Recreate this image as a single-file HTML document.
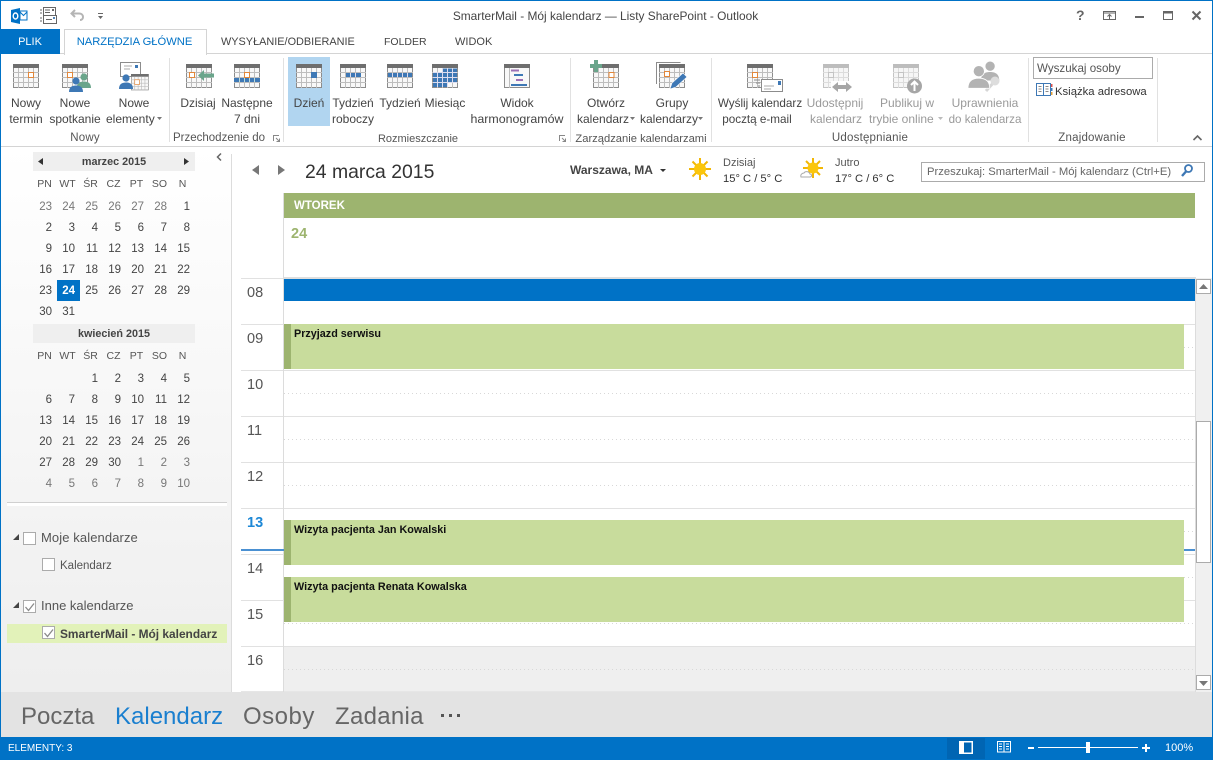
<!DOCTYPE html>
<html lang="pl"><head><meta charset="utf-8"><title>SmarterMail - Mój kalendarz</title>
<style>
html,body{margin:0;padding:0;width:1213px;height:760px;overflow:hidden;background:#fff}
body{position:relative;font-family:"Liberation Sans",sans-serif;font-size:12px;color:#444}
.a{position:absolute}
.t{position:absolute;white-space:nowrap;line-height:16px}
.c{position:absolute;white-space:nowrap;line-height:16px;text-align:center;width:120px}
.g{color:#9a9a9a}
.gl{color:#555;font-size:11.5px}
.sep{position:absolute;top:58px;width:1px;height:84px;background:#e1e1e1}
.row{position:absolute;left:29px;display:flex;height:16px;line-height:16px;font-size:11.5px;color:#444}
.row span{width:23px;text-align:right;flex:none}
.row.h span{color:#555;font-size:10.5px;text-align:center;width:23px;position:relative;left:4px}
.row .m{color:#777}
.hl{position:absolute;left:241px;width:42px;height:1px;background:#e1e1e1}
.gr{position:absolute;left:284px;width:911px;height:1px;background:#e1e1e1}
.dot{position:absolute;left:284px;width:911px;height:1px;background:repeating-linear-gradient(90deg,#d8d8d8 0 1px,transparent 1px 4px)}
.hr{position:absolute;left:247px;font-size:14.5px;color:#555;line-height:16px}
.ev{position:absolute;left:284px;width:900px;height:45px;background:#c8dc9c}
.ev i{position:absolute;left:0;top:0;width:7px;height:100%;background:#9db46f}
.ev b{position:absolute;left:10px;top:2px;font-size:10.8px;color:#111;line-height:16px;white-space:nowrap}
.cb{position:absolute;width:11px;height:11px;border:1px solid #ababab;background:#fff}
svg{position:absolute;overflow:visible}
</style></head><body>
<svg width="0" height="0" style="position:absolute">
<defs>
<g id="cal"><rect x=".5" y=".5" width="25" height="23" fill="#f8f8f8" stroke="#8c8c8c"/><rect x="0" y="0" width="26" height="4" fill="#6e6e6e"/><path d="M5.500 4v20M10.500 4v20M15.500 4v20M20.500 4v20M0 8.500h26M0 13.500h26M0 18.500h26" stroke="#bdbdbd" stroke-width="1" fill="none"/></g>
<g id="calg"><rect x=".5" y=".5" width="25" height="23" fill="#f6f6f6" stroke="#c4c4c4"/><rect x="0" y="0" width="26" height="4" fill="#bdbdbd"/><path d="M5.500 4v20M10.500 4v20M15.500 4v20M20.500 4v20M0 8.500h26M0 13.500h26M0 18.500h26" stroke="#dcdcdc" stroke-width="1" fill="none"/></g>
<g id="person"><circle cx="7" cy="4" r="3.600"/><path d="M0 15c0-5 3-6.500 7-6.500s7 1.500 7 6.500z"/></g>
</defs>
</svg>

<!-- window frame -->
<div class="a" style="left:0;top:0;width:1213px;height:1px;background:#0072c6"></div>
<div class="a" style="left:0;top:0;width:1px;height:760px;background:#0072c6"></div>
<div class="a" style="left:1212px;top:0;width:1px;height:760px;background:#0072c6"></div>

<!-- QAT -->
<svg style="left:11px;top:8px" width="17" height="16"><path d="M0 2l9-2v16l-9-2z" fill="#0072c6"/><rect x="9" y="3" width="7" height="9" fill="#fff" stroke="#0072c6"/><path d="M9 4l3.500 3.500L16 4" stroke="#0072c6" fill="none"/><ellipse cx="4.500" cy="8" rx="2.300" ry="3" fill="none" stroke="#fff" stroke-width="1.400"/></svg>
<svg style="left:40px;top:7px" width="17" height="17" fill="none" stroke="#666"><rect x="3.500" y=".5" width="12" height="8" fill="#fff"/><path d="M5 3h5M5 5.500h5"/><rect x="12" y="2" width="2" height="2" fill="#666" stroke="none"/><rect x="3.500" y="8.500" width="13" height="8" fill="#fff"/><path d="M6 12.500h6"/><rect x="13" y="10" width="2" height="2" fill="#5585b5" stroke="none"/><path d="M0 3h2M0 6h2M0 11h2M0 14h2"/></svg>
<svg style="left:70px;top:9px" width="15" height="12" fill="none" stroke="#b5b5b5" stroke-width="2"><path d="M5 1L1.500 4.500 5 8M2 4.500h7c3 0 4 2 4 3.500s-1 3-3 3"/></svg>
<svg style="left:98px;top:13px" width="6" height="7" fill="#666"><rect y="0" width="5" height="1"/><path d="M0 3h5l-2.500 3z"/></svg>

<div class="c" style="left:425px;top:8px;width:361px;color:#444;font-size:11.900px">SmarterMail - Mój kalendarz — Listy SharePoint - Outlook</div>

<!-- window buttons -->
<div class="t" style="left:1076px;top:7px;font-weight:bold;font-size:14px;color:#666">?</div>
<svg style="left:1103px;top:11px" width="14" height="10" fill="none" stroke="#666"><rect x=".5" y=".5" width="12" height="8"/><path d="M.5 2h12" /><path d="M6.500 8V4M4.500 5.500l2-2 2 2"/></svg>
<div class="a" style="left:1135px;top:16px;width:9px;height:2px;background:#666"></div>
<svg style="left:1163px;top:11px" width="11" height="9" fill="none" stroke="#666"><rect x=".5" y=".5" width="9" height="8"/><path d="M0 1.500h10" stroke-width="2"/></svg>
<svg style="left:1192px;top:11px" width="10" height="10" stroke="#666" stroke-width="2"><path d="M.5.5l8 8M8.500.5l-8 8"/></svg>

<!-- Tabs -->
<div class="a" style="left:1px;top:53px;width:1211px;height:1px;background:#d4d4d4"></div>
<div class="a" style="left:0;top:29px;width:60px;height:25px;background:#0072c6"></div>
<div class="c" style="left:0;top:34px;width:60px;color:#fff;font-size:11px">PLIK</div>
<div class="a" style="left:64px;top:29px;width:141px;height:25px;background:#fff;border:1px solid #d4d4d4;border-bottom:none"></div>
<div class="c" style="left:64px;top:34px;width:141px;color:#0072c6;font-size:11.200px">NARZĘDZIA GŁÓWNE</div>
<div class="t" style="left:221px;top:34px;font-size:10.900px;color:#444">WYSYŁANIE/ODBIERANIE</div>
<div class="t" style="left:384px;top:34px;font-size:10.500px;color:#444">FOLDER</div>
<div class="t" style="left:455px;top:34px;font-size:11px;color:#444">WIDOK</div>

<!-- Ribbon -->
<div class="a" style="left:1px;top:146px;width:1211px;height:1px;background:#d4d4d4"></div>
<div class="sep" style="left:169px"></div><div class="sep" style="left:283px"></div><div class="sep" style="left:570px"></div><div class="sep" style="left:711px"></div><div class="sep" style="left:1028px"></div><div class="sep" style="left:1157px"></div>
<div class="a" style="left:288px;top:57px;width:42px;height:69px;background:#b1d5f0"></div>

<!-- Ribbon icons -->
<svg style="left:13px;top:64px" width="26" height="24"><use href="#cal"/><rect x="15.500" y="8.500" width="5" height="5" fill="#fff" stroke="#e2873a"/></svg>
<svg style="left:62px;top:64px" width="30" height="29"><use href="#cal"/><rect x="5.500" y="8.500" width="5" height="5" fill="#fff" stroke="#e2873a"/><use href="#person" x="15" y="9" fill="#6aa58b"/><use href="#person" x="7" y="13" fill="#3e78b5"/></svg>
<svg style="left:119px;top:62px" width="30" height="30"><rect x="1.500" y=".5" width="20" height="14" fill="#fff" stroke="#8c8c8c"/><path d="M5 4h8M5 7h6" stroke="#a8a8a8"/><rect x="16" y="3" width="3" height="3" fill="#3e78b5"/><g transform="translate(12 12) scale(.68)"><use href="#cal"/><rect x="5.500" y="8.500" width="7" height="7" fill="#fff" stroke="#e2873a"/></g><use href="#person" x="0" y="12" fill="#3e78b5"/></svg>
<svg style="left:186px;top:64px" width="30" height="24"><use href="#cal"/><rect x="3.500" y="8.500" width="5" height="5" fill="#fff" stroke="#e2873a"/><path d="M12 11.500L18 6v3.500h10v4H18V17z" fill="#6aa58b"/></svg>
<svg style="left:234px;top:64px" width="26" height="24"><use href="#cal"/><rect x="10.500" y="8.500" width="5" height="5" fill="#fff" stroke="#e2873a"/><path d="M0 14h26v4H0z" fill="#3e78b5"/><path d="M5.500 14v4M10.500 14v4M15.500 14v4M20.500 14v4" stroke="#bdd" /></svg>
<svg style="left:296px;top:64px" width="26" height="24"><use href="#cal"/><rect x="15" y="8" width="6" height="6" fill="#3e78b5"/></svg>
<svg style="left:340px;top:64px" width="26" height="24"><use href="#cal"/><path d="M6 9h15v4H6z" fill="#3e78b5"/><path d="M10.500 9v4M15.500 9v4" stroke="#dde"/></svg>
<svg style="left:387px;top:64px" width="26" height="24"><use href="#cal"/><path d="M1 9h24v4H1z" fill="#3e78b5"/><path d="M5.500 9v4M10.500 9v4M15.500 9v4M20.500 9v4" stroke="#dde"/></svg>
<svg style="left:432px;top:64px" width="26" height="24"><use href="#cal"/><path d="M11 4.500h14V9H11zM1 9h24v5H1zM1 14h24v5H1zM1 19h15v4H1z" fill="#3e78b5"/><path d="M5.500 9v14M10.500 4v19M15.500 4v19M20.500 4v15M1 8.500h24M1 13.500h24M1 18.500h24" stroke="#dde" fill="none"/></svg>
<svg style="left:504px;top:64px" width="26" height="24"><rect x=".5" y=".5" width="25" height="23" fill="#f8f8f8" stroke="#8c8c8c"/><rect width="26" height="4" fill="#6e6e6e"/><path d="M5.500 4v20" stroke="#bdbdbd"/><path d="M7 5.500h8v2H7z" fill="#9b6fb5"/><path d="M10 10h9v2h-9z" fill="#3e78b5"/><path d="M12 15h7v2h-7z" fill="#9b6fb5"/><path d="M7 20h16v2H7z" fill="#3e78b5"/></svg>
<svg style="left:590px;top:60px" width="30" height="28"><use href="#cal" x="3" y="4"/><rect x="19" y="12.500" width="5" height="5" fill="#fff" stroke="#e2873a"/><path d="M4 0h4v4h4v4H8v4H4V8H0V4h4z" fill="#6aa58b"/></svg>
<svg style="left:656px;top:62px" width="32" height="30"><path d="M.5 22V.5h24" fill="none" stroke="#8c8c8c"/><use href="#cal" x="3" y="2"/><rect x="8.500" y="9.500" width="5" height="5" fill="#fff" stroke="#e2873a"/><path d="M14 27l2-6 11-10 4 4-11 10z" fill="#3e78b5" stroke="#fff" stroke-width=".6"/></svg>
<svg style="left:747px;top:64px" width="37" height="29"><use href="#cal"/><rect x="5.500" y="8.500" width="5" height="5" fill="#fff" stroke="#e2873a"/><rect x="14.500" y="15.500" width="21" height="12" fill="#fff" stroke="#8c8c8c"/><path d="M17 22h10M17 25h7" stroke="#aaa"/><rect x="31" y="17" width="3" height="4" fill="#3e78b5"/><path d="M7 16h6M9 19h4M11 22h2" stroke="#888"/></svg>
<svg style="left:823px;top:64px" width="30" height="29"><use href="#calg"/><rect x="5.500" y="8.500" width="5" height="5" fill="none" stroke="#c4c4c4"/><rect x="8" y="17" width="22" height="12" fill="#fff"/><path d="M9 23l6-5v3h8v-3l6 5-6 5v-3h-8v3z" fill="#a6a6a6"/></svg>
<svg style="left:893px;top:64px" width="30" height="30"><use href="#calg"/><rect x="5.500" y="8.500" width="5" height="5" fill="none" stroke="#c4c4c4"/><circle cx="21.500" cy="22" r="7.500" fill="#a6a6a6"/><path d="M21.500 27v-9M18 21l3.500-3.500L25 21" stroke="#fff" stroke-width="2" fill="none"/></svg>
<svg style="left:968px;top:60px" width="33" height="33" fill="#b3b3b3"><g transform="translate(13 1) scale(1.300)"><use href="#person"/></g><path d="M18 31l8-9" stroke="#d6d6d6" stroke-width="3"/><circle cx="27" cy="21" r="4.500" fill="#ddd"/><g transform="translate(0 5) scale(1.550)" stroke="#fff" stroke-width=".5"><use href="#person"/></g></svg>
<svg style="left:1036px;top:83px" width="17" height="14"><rect x=".5" y=".5" width="14" height="12" fill="#fff" stroke="#3e78b5"/><path d="M7.500 1v11" stroke="#3e78b5"/><path d="M2.500 3.500h3M2.500 6h3M2.500 8.500h3M9.500 3.500h3M9.500 6h3M9.500 8.500h3" stroke="#888"/><path d="M15 1h1.500v3H15z" fill="#d9534f"/><path d="M15 5h1.500v3H15z" fill="#3e78b5"/><path d="M15 9h1.500v3H15z" fill="#e2a03a"/></svg>

<!-- Ribbon labels -->
<div class="c" style="left:-34px;top:95px">Nowy</div><div class="c" style="left:-34px;top:111px">termin</div>
<div class="c" style="left:15px;top:95px">Nowe</div><div class="c" style="left:15px;top:111px">spotkanie</div>
<div class="c" style="left:74px;top:95px">Nowe</div><div class="t" style="left:106px;top:111px">elementy</div>
<svg style="left:157px;top:117px" width="6" height="3" fill="#777"><path d="M0 0h5l-2.500 3z"/></svg>
<div class="c" style="left:138px;top:95px">Dzisiaj</div>
<div class="c" style="left:187px;top:95px">Następne</div><div class="c" style="left:187px;top:111px">7 dni</div>
<div class="c" style="left:249px;top:95px">Dzień</div>
<div class="c" style="left:293px;top:95px">Tydzień</div><div class="c" style="left:293px;top:111px">roboczy</div>
<div class="c" style="left:340px;top:95px">Tydzień</div>
<div class="c" style="left:385px;top:95px">Miesiąc</div>
<div class="c" style="left:457px;top:95px">Widok</div><div class="c" style="left:457px;top:111px;font-size:12.400px">harmonogramów</div>
<div class="c" style="left:546px;top:95px">Otwórz</div><div class="t" style="left:577px;top:111px">kalendarz</div>
<svg style="left:630px;top:117px" width="6" height="3" fill="#777"><path d="M0 0h5l-2.500 3z"/></svg>
<div class="c" style="left:612px;top:95px">Grupy</div><div class="t" style="left:640px;top:111px">kalendarzy</div>
<svg style="left:698px;top:117px" width="6" height="3" fill="#777"><path d="M0 0h5l-2.500 3z"/></svg>
<div class="c" style="left:700px;top:96px;font-size:11.700px">Wyślij kalendarz</div><div class="c" style="left:697px;top:112px;font-size:11.700px">pocztą e-mail</div>
<div class="c g" style="left:775px;top:95px">Udostępnij</div><div class="c g" style="left:776px;top:111px">kalendarz</div>
<div class="c g" style="left:847px;top:95px">Publikuj w</div><div class="t g" style="left:869px;top:111px">trybie online</div>
<svg style="left:938px;top:117px" width="6" height="3" fill="#bbb"><path d="M0 0h5l-2.500 3z"/></svg>
<div class="c g" style="left:925px;top:95px">Uprawnienia</div><div class="c g" style="left:925px;top:112px;font-size:11.600px">do kalendarza</div>

<div class="c gl" style="left:25px;top:130px;letter-spacing:.2px">Nowy</div>
<div class="t gl" style="left:173px;top:130px">Przechodzenie do</div>
<div class="c gl" style="left:358px;top:131px;font-size:11px">Rozmieszczanie</div>
<div class="c gl" style="left:561px;top:131px;width:160px;font-size:11.200px">Zarządzanie kalendarzami</div>
<div class="c gl" style="left:810px;top:130px;letter-spacing:.2px">Udostępnianie</div>
<div class="c gl" style="left:1032px;top:130px;letter-spacing:.2px">Znajdowanie</div>
<svg style="left:273px;top:135px" width="7" height="7" fill="none" stroke="#888"><path d="M.5 6V.5H6M3 3l3.500 3.500M6.500 3.500v3h-3"/></svg>
<svg style="left:559px;top:135px" width="7" height="7" fill="none" stroke="#888"><path d="M.5 6V.5H6M3 3l3.500 3.500M6.500 3.500v3h-3"/></svg>
<svg style="left:1193px;top:135px" width="9" height="6" fill="none" stroke="#666" stroke-width="1.600"><path d="M.5 5l4-4 4 4"/></svg>

<div class="a" style="left:1033px;top:57px;width:118px;height:20px;border:1px solid #ababab;background:#fff"></div>
<div class="t" style="left:1037px;top:61px;color:#555;font-size:11.600px">Wyszukaj osoby</div>
<div class="t" style="left:1055px;top:84px;color:#333;font-size:11.300px">Książka adresowa</div>

<!-- Sidebar -->
<div class="a" style="left:1px;top:147px;width:230px;height:545px;background:linear-gradient(#fff,#eee)"></div>
<div class="a" style="left:231px;top:154px;width:1px;height:538px;background:#dcdcdc"></div>
<svg style="left:216px;top:153px" width="7" height="9" fill="none" stroke="#666" stroke-width="1.500"><path d="M5 .5L1.500 4 5 7.500"/></svg>

<div class="a" style="left:33px;top:152px;width:162px;height:19px;background:#efefef"></div>
<svg style="left:38px;top:158px" width="6" height="8" fill="#333"><path d="M5 0v7L0 3.500z"/></svg>
<svg style="left:184px;top:158px" width="6" height="8" fill="#333"><path d="M0 0v7l5-3.500z"/></svg>
<div class="c" style="left:54px;top:154px;font-weight:bold;font-size:10.800px;color:#444">marzec 2015</div>

<div class="row h" style="top:176px"><span>PN</span><span>WT</span><span>ŚR</span><span>CZ</span><span>PT</span><span>SO</span><span>N</span></div>
<div class="row" style="top:199px"><span class="m">23</span><span class="m">24</span><span class="m">25</span><span class="m">26</span><span class="m">27</span><span class="m">28</span><span>1</span></div>
<div class="row" style="top:220px"><span>2</span><span>3</span><span>4</span><span>5</span><span>6</span><span>7</span><span>8</span></div>
<div class="row" style="top:241px"><span>9</span><span>10</span><span>11</span><span>12</span><span>13</span><span>14</span><span>15</span></div>
<div class="row" style="top:262px"><span>16</span><span>17</span><span>18</span><span>19</span><span>20</span><span>21</span><span>22</span></div>
<div class="a" style="left:57px;top:280px;width:23px;height:21px;background:#0072c6"></div>
<div class="row" style="top:283px"><span>23</span><span style="color:#fff;font-weight:bold">24</span><span>25</span><span>26</span><span>27</span><span>28</span><span>29</span></div>
<div class="row" style="top:304px"><span>30</span><span>31</span></div>

<div class="a" style="left:33px;top:324px;width:162px;height:19px;background:#efefef"></div>
<div class="c" style="left:54px;top:326px;font-weight:bold;font-size:10.800px;color:#444">kwiecień 2015</div>

<div class="row h" style="top:348px"><span>PN</span><span>WT</span><span>ŚR</span><span>CZ</span><span>PT</span><span>SO</span><span>N</span></div>
<div class="row" style="top:371px"><span></span><span></span><span>1</span><span>2</span><span>3</span><span>4</span><span>5</span></div>
<div class="row" style="top:392px"><span>6</span><span>7</span><span>8</span><span>9</span><span>10</span><span>11</span><span>12</span></div>
<div class="row" style="top:413px"><span>13</span><span>14</span><span>15</span><span>16</span><span>17</span><span>18</span><span>19</span></div>
<div class="row" style="top:434px"><span>20</span><span>21</span><span>22</span><span>23</span><span>24</span><span>25</span><span>26</span></div>
<div class="row" style="top:455px"><span>27</span><span>28</span><span>29</span><span>30</span><span class="m">1</span><span class="m">2</span><span class="m">3</span></div>
<div class="row" style="top:476px"><span class="m">4</span><span class="m">5</span><span class="m">6</span><span class="m">7</span><span class="m">8</span><span class="m">9</span><span class="m">10</span></div>

<div class="a" style="left:7px;top:502px;width:220px;height:1px;background:#d0d0d0"></div>
<div class="a" style="left:7px;top:503px;width:220px;height:3px;background:#fff"></div>

<svg style="left:13px;top:534px" width="7" height="7" fill="#444"><path d="M6 0v6H0z"/></svg>
<div class="cb" style="left:23px;top:532px"></div>
<div class="t" style="left:41px;top:530px;font-size:13px;letter-spacing:.1px;color:#555">Moje kalendarze</div>
<div class="cb" style="left:42px;top:558px"></div>
<div class="t" style="left:60px;top:558px;font-size:11.500px;color:#555">Kalendarz</div>
<svg style="left:13px;top:602px" width="7" height="7" fill="#444"><path d="M6 0v6H0z"/></svg>
<div class="cb" style="left:23px;top:600px"></div>
<svg style="left:25px;top:603px" width="10" height="9" fill="none" stroke="#8a8a8a" stroke-width="1.300"><path d="M.5 4l3 3.500 5.500-7"/></svg>
<div class="t" style="left:41px;top:598px;font-size:13px;color:#555">Inne kalendarze</div>
<div class="a" style="left:7px;top:624px;width:220px;height:19px;background:#e2f2b9"></div>
<div class="cb" style="left:42px;top:626px"></div>
<svg style="left:44px;top:629px" width="10" height="9" fill="none" stroke="#8a8a8a" stroke-width="1.300"><path d="M.5 4l3 3.500 5.500-7"/></svg>
<div class="t" style="left:60px;top:626px;font-size:11.900px;font-weight:bold;color:#444">SmarterMail - Mój kalendarz</div>

<!-- Cal header -->
<svg style="left:252px;top:165px" width="8" height="11" fill="#777"><path d="M7 0v10L0 5z"/></svg>
<svg style="left:278px;top:165px" width="8" height="11" fill="#777"><path d="M0 0v10l7-5z"/></svg>
<div class="t" style="left:305px;top:162px;font-size:19.400px;line-height:20px;color:#333">24 marca 2015</div>
<div class="t" style="left:570px;top:162px;font-weight:bold;color:#444">Warszawa, MA</div>
<svg style="left:660px;top:169px" width="7" height="4" fill="#333"><path d="M0 0h6l-3 3z"/></svg>
<svg style="left:689px;top:158px" width="22" height="22"><g stroke="#f2b705" stroke-width="2"><path d="M11 0v22M0 11h22M3.500 3.500l15 15M18.500 3.500l-15 15"/></g><circle cx="11" cy="11" r="6" fill="#fbc60c"/></svg>
<div class="t" style="left:723px;top:155px;font-size:11px;color:#555">Dzisiaj</div>
<div class="t" style="left:723px;top:171px;font-size:11.200px;color:#333">15° C / 5° C</div>
<svg style="left:800px;top:158px" width="24" height="22"><g stroke="#f2b705" stroke-width="2"><path d="M13 0v20M3 10h20M6 3l14 14M20 3L6 17"/></g><circle cx="13" cy="10" r="5.500" fill="#fbc60c"/><path d="M1 19c-1-3 2-4 3-4 1-2 5-2 6 1 2 0 2 3 0 3z" fill="#fff" stroke="#aaa"/></svg>
<div class="t" style="left:835px;top:155px;font-size:11px;color:#555">Jutro</div>
<div class="t" style="left:835px;top:171px;font-size:11.200px;color:#333">17° C / 6° C</div>
<div class="a" style="left:921px;top:162px;width:282px;height:18px;border:1px solid #ababab;background:#fff"></div>
<div class="t" style="left:927px;top:164px;font-size:11.250px;color:#666">Przeszukaj: SmarterMail - Mój kalendarz (Ctrl+E)</div>
<svg style="left:1181px;top:164px" width="12" height="13" fill="none" stroke="#3e78b5" stroke-width="1.800"><circle cx="7.500" cy="4.500" r="3.500"/><path d="M5 7.500L1 12" stroke-width="2.400"/></svg>

<!-- Day header -->
<div class="a" style="left:284px;top:193px;width:911px;height:25px;background:#9db46f"></div>
<div class="t" style="left:294px;top:198px;font-weight:bold;font-size:11.500px;color:#fff">WTOREK</div>
<div class="t" style="left:291px;top:226px;font-weight:bold;font-size:14.500px;color:#9db46f">24</div>

<!-- Grid -->
<div class="a" style="left:284px;top:646px;width:911px;height:45px;background:#efefef"></div>
<div class="a" style="left:241px;top:691px;width:954px;height:1px;background:#e6e6e6"></div>
<div class="a" style="left:283px;top:193px;width:1px;height:499px;background:#dcdcdc"></div>
<div class="a" style="left:1195px;top:277px;width:1px;height:415px;background:#dcdcdc"></div>
<div class="a" style="left:284px;top:277px;width:912px;height:2px;background:#dedede"></div>

<div class="hl" style="top:278px"></div><div class="hl" style="top:324px"></div><div class="hl" style="top:370px"></div><div class="hl" style="top:416px"></div><div class="hl" style="top:462px"></div><div class="hl" style="top:508px"></div><div class="hl" style="top:554px"></div><div class="hl" style="top:600px"></div><div class="hl" style="top:646px"></div>
<div class="gr" style="top:324px"></div><div class="gr" style="top:370px"></div><div class="gr" style="top:416px"></div><div class="gr" style="top:462px"></div><div class="gr" style="top:508px"></div><div class="gr" style="top:554px"></div><div class="gr" style="top:600px"></div><div class="gr" style="top:646px"></div>
<div class="dot" style="top:347px"></div><div class="dot" style="top:393px"></div><div class="dot" style="top:439px"></div><div class="dot" style="top:485px"></div><div class="dot" style="top:531px"></div><div class="dot" style="top:577px"></div><div class="dot" style="top:623px"></div><div class="dot" style="top:669px"></div>

<div class="a" style="left:284px;top:279px;width:911px;height:22px;background:#0072c6"></div>
<div class="a" style="left:241px;top:549px;width:954px;height:2px;background:#4a90d2"></div>

<div class="ev" style="top:324px"><i></i><b>Przyjazd serwisu</b></div>
<div class="ev" style="top:520px"><i></i><b>Wizyta pacjenta Jan Kowalski</b></div>
<div class="ev" style="top:577px"><i></i><b>Wizyta pacjenta Renata Kowalska</b></div>

<div class="hr" style="top:285px">08</div><div class="hr" style="top:331px">09</div><div class="hr" style="top:377px">10</div><div class="hr" style="top:423px">11</div><div class="hr" style="top:469px">12</div>
<div class="hr" style="top:515px;color:#1e88d6;font-weight:bold">13</div>
<div class="hr" style="top:561px">14</div><div class="hr" style="top:607px">15</div><div class="hr" style="top:653px">16</div>

<!-- Scrollbar -->
<div class="a" style="left:1196px;top:278px;width:16px;height:414px;background:#f0f0f0"></div>
<div class="a" style="left:1196px;top:279px;width:13px;height:13px;background:#fff;border:1px solid #ababab"></div>
<svg style="left:1199px;top:284px" width="9" height="5" fill="#777"><path d="M4.500 0L9 5H0z"/></svg>
<div class="a" style="left:1196px;top:421px;width:13px;height:140px;background:#fff;border:1px solid #ababab"></div>
<div class="a" style="left:1196px;top:675px;width:13px;height:13px;background:#fff;border:1px solid #ababab"></div>
<svg style="left:1199px;top:681px" width="9" height="5" fill="#777"><path d="M0 0h9L4.500 5z"/></svg>

<!-- Bottom nav -->
<div class="a" style="left:1px;top:692px;width:1211px;height:45px;background:#e3e3e3"></div>
<div class="t" style="left:21px;top:703px;font-size:24px;line-height:28px;color:#666">Poczta</div>
<div class="t" style="left:115px;top:703px;font-size:24px;line-height:28px;color:#1a7fcf">Kalendarz</div>
<div class="t" style="left:243px;top:703px;font-size:24px;line-height:28px;letter-spacing:.5px;color:#666">Osoby</div>
<div class="t" style="left:335px;top:703px;font-size:24px;line-height:28px;letter-spacing:.3px;color:#666">Zadania</div>
<svg style="left:441px;top:714px" width="22" height="4" fill="#555"><rect width="3" height="3"/><rect x="8" width="3" height="3"/><rect x="16" width="3" height="3"/></svg>

<!-- Status bar -->
<div class="a" style="left:0;top:737px;width:1213px;height:23px;background:#0072c6"></div>
<div class="t" style="left:8px;top:741px;font-size:10px;color:#fff">ELEMENTY: 3</div>
<div class="a" style="left:947px;top:738px;width:38px;height:21px;background:#0065b3"></div>
<svg style="left:959px;top:741px" width="14" height="13"><rect width="14" height="13" fill="#fff"/><rect x="5" y="1.500" width="7.500" height="10" fill="#0065b3"/></svg>
<svg style="left:997px;top:741px" width="14" height="13" fill="none" stroke="#fff"><path d="M.5.5H13.500V11H.5zM7 .5v11M2 3h3M2 5.500h3M2 8h3M9 3h3M9 5.500h3M9 8h3"/></svg>
<div class="a" style="left:1028px;top:747px;width:6px;height:2px;background:#fff"></div>
<div class="a" style="left:1038px;top:747px;width:100px;height:1px;background:#fff"></div>
<div class="a" style="left:1086px;top:742px;width:4px;height:11px;background:#fff"></div>
<div class="a" style="left:1142px;top:747px;width:8px;height:2px;background:#fff"></div>
<div class="a" style="left:1145px;top:744px;width:2px;height:8px;background:#fff"></div>
<div class="t" style="left:1165px;top:740px;font-size:11px;color:#fff">100%</div>
</body></html>
